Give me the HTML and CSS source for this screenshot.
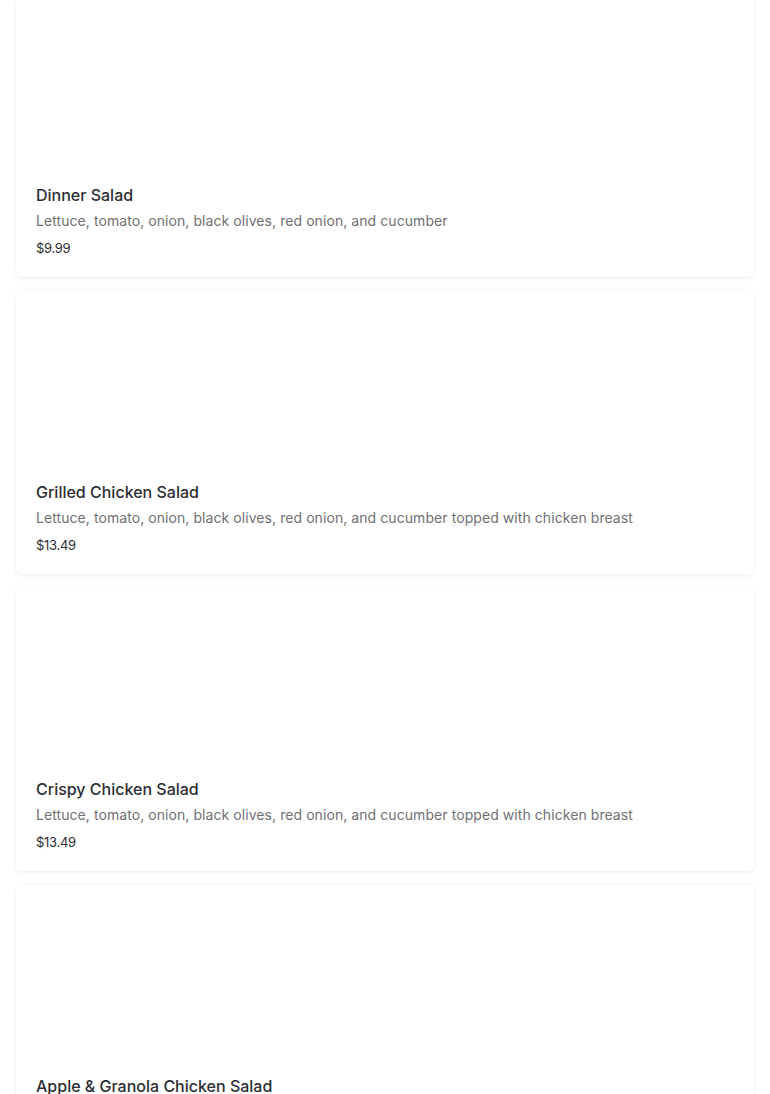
FILE: index.html
```html
<!DOCTYPE html>
<html>
<head>
<meta charset="utf-8">
<link rel="stylesheet" href="styles.css">
</head>
<body>
<div class="list">
  <div class="card">
    <div class="thumb"></div>
    <div class="title">Dinner Salad</div>
    <div class="desc">Lettuce, tomato, onion, black olives, red onion, and cucumber</div>
    <div class="price">$9.99</div>
  </div>
  <div class="card">
    <div class="thumb"></div>
    <div class="title">Grilled Chicken Salad</div>
    <div class="desc">Lettuce, tomato, onion, black olives, red onion, and cucumber topped with chicken breast</div>
    <div class="price">$13.49</div>
  </div>
  <div class="card">
    <div class="thumb"></div>
    <div class="title">Crispy Chicken Salad</div>
    <div class="desc">Lettuce, tomato, onion, black olives, red onion, and cucumber topped with chicken breast</div>
    <div class="price">$13.49</div>
  </div>
  <div class="card">
    <div class="thumb"></div>
    <div class="title">Apple &amp; Granola Chicken Salad</div>
    <div class="desc">Lettuce, tomato, onion, black olives, red onion, and cucumber topped with chicken breast</div>
    <div class="price">$13.49</div>
  </div>
</div>
</body>
</html>
```
FILE: styles.css
```css
html, body {
  margin: 0;
  padding: 0;
  background: #ffffff;
  overflow: hidden;
}
body {
  font-family: "Inter", "Liberation Sans", sans-serif;
}
.list {
  display: flex;
  flex-direction: column;
  gap: 14px;
  padding: 0 16px;
  margin-top: -6px;
}
.card {
  background: #fff;
  border-radius: 6px;
  box-shadow: 0 1px 5px rgba(0, 0, 0, 0.08);
  padding: 0 20px 20px;
  display: flex;
  flex-direction: column;
}
.thumb {
  height: 189px;
}
.title {
  font-size: 16px;
  line-height: 24px;
  font-weight: 500;
  color: #2d2d33;
  letter-spacing: 0;
}
.desc {
  margin-top: 4px;
  font-size: 14px;
  line-height: 20px;
  color: #707074;
  letter-spacing: 0.07px;
}
.price {
  margin-top: 8px;
  font-size: 13px;
  line-height: 18px;
  color: #2d2d33;
  letter-spacing: -0.3px;
}
```
